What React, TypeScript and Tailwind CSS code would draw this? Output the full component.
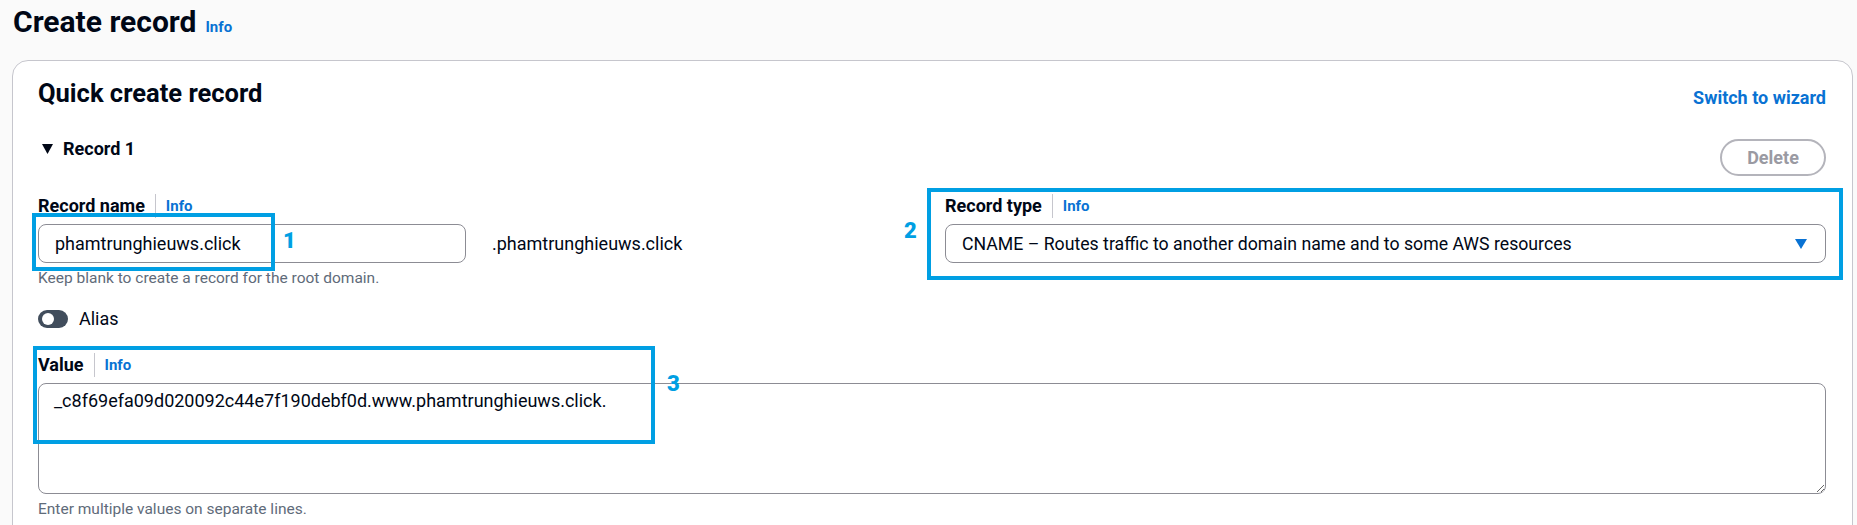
import React from "react";

const ACCENT = "border-[#009fe3]";

const InfoLabel = ({ label }: { label: string }) => (
  <div className="flex h-[24px] items-center">
    <span className="text-[18px] leading-[24px] font-bold text-[#000716]">{label}</span>
    <span className="ml-[10px] flex h-[24px] items-center border-l border-[#c6c6cd] pl-[10px] text-[15px] font-bold text-[#0972d3]">
      Info
    </span>
  </div>
);

const Marker = ({ n, className }: { n: string; className: string }) => (
  <span className={`absolute text-[22px] leading-[24px] font-black text-[#009fe3] ${className}`}>{n}</span>
);

export default function App() {
  return (
    <div className="h-[525px] overflow-hidden bg-[#fafafa] font-['Roboto',sans-serif] text-[#000716]">
      <div className="flex items-baseline gap-[9px] pl-[13px] pt-[4px]">
        <h1 className="text-[30px] leading-[36px] font-bold">Create record</h1>
        <span className="text-[15px] font-bold text-[#0972d3]">Info</span>
      </div>

      <div className="ml-[12px] mr-[4px] mt-[20px] h-[600px] rounded-t-[16px] border border-[#c6c6cd] bg-white pl-[25px] pr-[26px] pt-[16px]">
        <div className="flex items-start justify-between">
          <h2 className="text-[25.5px] leading-[32px] font-bold">Quick create record</h2>
          <a className="mt-[9px] text-[18px] leading-[24px] font-bold text-[#0972d3]">Switch to wizard</a>
        </div>

        <div className="mt-[27px] flex items-start justify-between">
          <div className="flex items-center gap-[10px] pl-[4px]">
            <svg width="11" height="10" viewBox="0 0 11 10">
              <polygon points="0,0 11,0 5.5,10" fill="#000716" />
            </svg>
            <span className="text-[18px] leading-[24px] font-bold">Record 1</span>
          </div>
          <button className="mt-[2px] h-[37px] w-[106px] rounded-full border-2 border-[#b4b4bb] text-[18px] font-bold text-[#9a9aa2]">
            Delete
          </button>
        </div>

        <div className="mt-[18px] grid grid-cols-2 gap-x-[26px]">
          <div className="relative">
            <InfoLabel label="Record name" />
            <div className="mt-[6px] flex items-center gap-[26px]">
              <div className="flex h-[39px] w-[428px] items-center rounded-[8px] border border-[#8c8c94] pl-[16px] text-[18px] leading-[24px]">
                phamtrunghieuws.click
              </div>
              <span className="text-[18px] leading-[24px]">.phamtrunghieuws.click</span>
            </div>
            <p className="mt-[5px] text-[15.5px] leading-[20px] text-[#5f6b7a]">
              Keep blank to create a record for the root domain.
            </p>
            <div className={`absolute left-[-6px] top-[19px] h-[58px] w-[243px] border-4 ${ACCENT}`} />
            <Marker n="1" className="left-[245px] top-[35px]" />
          </div>

          <div className="relative">
            <InfoLabel label="Record type" />
            <div className="mt-[6px] flex h-[39px] items-center justify-between rounded-[8px] border border-[#8c8c94] pl-[16px] pr-[18px] text-[17.7px] leading-[24px]">
              <span>CNAME – Routes traffic to another domain name and to some AWS resources</span>
              <svg width="12" height="10" viewBox="0 0 12 10">
                <polygon points="0,0 12,0 6,10" fill="#0972d3" />
              </svg>
            </div>
            <div className={`absolute left-[-18px] top-[-6px] h-[92px] w-[916px] border-4 ${ACCENT}`} />
            <Marker n="2" className="left-[-41px] top-[25px]" />
          </div>
        </div>

        <div className="mt-[19px] flex items-center gap-[11px]">
          <div className="flex h-[18px] w-[30px] items-center rounded-full bg-[#414d5c] pl-[4px]">
            <div className="h-[12px] w-[12px] rounded-full bg-white" />
          </div>
          <span className="text-[18px] leading-[24px]">Alias</span>
        </div>

        <div className="relative mt-[22px]">
          <InfoLabel label="Value" />
          <textarea
            readOnly
            defaultValue="_c8f69efa09d020092c44e7f190debf0d.www.phamtrunghieuws.click."
            className="mt-[6px] block h-[111px] w-full resize-y rounded-[8px] border border-[#8c8c94] bg-white px-[15px] pt-[5px] text-[18px] leading-[24px] text-[#000716] outline-none"
          />
          <p className="mt-[5px] text-[15.5px] leading-[20px] text-[#5f6b7a]">Enter multiple values on separate lines.</p>
          <div className={`absolute left-[-5px] top-[-7px] h-[98px] w-[622px] border-4 ${ACCENT}`} />
          <Marker n="3" className="left-[629px] top-[19px]" />
        </div>
      </div>
    </div>
  );
}
